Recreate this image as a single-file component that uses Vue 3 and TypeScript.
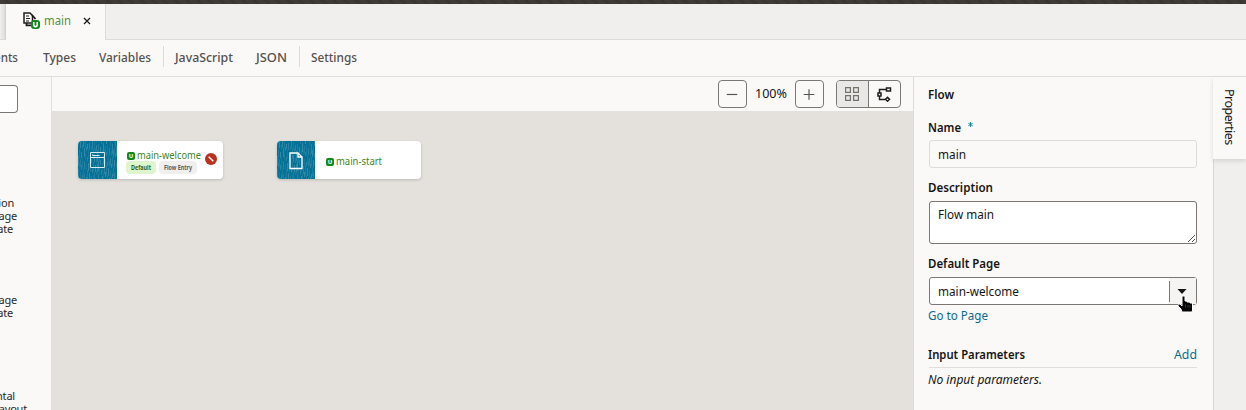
<script setup lang="ts">
import type { Directive } from 'vue'

interface Tab { label: string; width: number; kind?: string }

// Condenses a label horizontally to the given width.
const vFit: Directive<HTMLElement, number> = {
  mounted(el, binding) {
    const natural = el.getBoundingClientRect().width
    el.style.transform = `scaleX(${binding.value / natural})`
    el.style.marginRight = `${binding.value - natural}px`
  },
}

const tabs: Tab[] = [
  { label: 'Types', width: 33 },
  { label: 'Variables', width: 52, kind: 'last' },
  { label: 'JavaScript', width: 58, kind: 'divider' },
  { label: 'JSON', width: 31, kind: 'last' },
  { label: 'Settings', width: 46, kind: 'divider' },
]

// Thin vertical brush marks of the tile artwork.
const streaks = Array.from({ length: 110 }, (_, i) => ({
  x: (i * 16) % 39,
  y: ((i * 29 + 5) % 43) - 3,
  h: 4 + ((i * 5) % 7),
  o: 0.12 + (i % 4) * 0.07,
}))
</script>

<template>
  <div class="app">
    <div class="strip"></div>
    <header class="tabbar">
      <div class="prev"></div>
      <div class="file">
        <svg class="file-icon" width="17" height="17" viewBox="0 0 17 17">
          <path d="M1 1h6l2.500 2.500V11H1z" fill="#fbf9f8" stroke="#201e1c" stroke-width="1.500" />
          <path d="M3 4h3M3 6.500h4M3 9h3" stroke="#201e1c" />
          <path d="M9 3l3.500 4M3.500 11v2.300H8" fill="none" stroke="#201e1c" stroke-width="1.800" />
          <rect x="8" y="8" width="9" height="9" rx="3" fill="#128a1b" />
          <path d="M10.800 10v2.800q0 1.900 1.700 1.900t1.700-1.900V10" fill="none" stroke="#fff" stroke-width="1.500" />
        </svg>
        <span v-fit="27" class="t green">main</span>
        <svg class="close" width="8" height="8" viewBox="0 0 8 8"><path d="M1 1l6 6M7 1L1 7" stroke="#201e1c" stroke-width="1.300" /></svg>
      </div>
      <div class="rest"></div>
    </header>
    <nav class="nav">
      <div class="cut"><span v-fit="24" class="t">ents</span></div>
      <div v-for="tab in tabs" :key="tab.label" class="item" :class="tab.kind">
        <span v-fit="tab.width" class="t">{{ tab.label }}</span>
      </div>
    </nav>
    <main class="body">
      <aside class="palette">
        <div class="search"></div>
        <div class="names first"><p class="w14">ion</p><p class="w17">age</p><p class="w13">ate</p></div>
        <div class="names second"><p class="w17">age</p><p class="w13">ate</p></div>
        <div class="names third"><p class="w15">ntal</p><p class="w27">ayout</p></div>
      </aside>
      <section class="diagram">
        <div class="toolbar">
          <button class="btn"><svg width="28" height="26" viewBox="0 0 28 26"><path d="M8 13.500h11" stroke="#55514d" stroke-width="1.200" /></svg></button>
          <div class="zoom"><span v-fit="32" class="t">100%</span></div>
          <button class="btn"><svg width="28" height="26" viewBox="0 0 28 26"><path d="M8 13.500h11M13.500 8v11" stroke="#55514d" stroke-width="1.200" /></svg></button>
          <div class="modes">
            <div class="mode active">
              <svg width="14" height="14" viewBox="0 0 14 14"><path d="M.6.600h4.800v4.800H.6zM8.600.600h4.800v4.800H8.600zM.6 8.600h4.800v4.800H.6zM8.600 8.600h4.800v4.800H8.600z" fill="none" stroke="#75716d" stroke-width="1.200" /></svg>
            </div>
            <div class="mode">
              <svg width="15" height="15" viewBox="0 0 15 15" fill="none" stroke="#201e1c" stroke-width="1.500"><rect x="9.500" y="1" width="4" height="3" /><rect x="1" y="6" width="3" height="3" /><path d="M9.500 2.500H2.500V6M2.500 9v3.500H8" /><path d="M10.500 10.200l2 2-2 2-2-2z" /></svg>
            </div>
          </div>
        </div>
        <div class="canvas">
          <article class="card wide">
            <svg class="tile" width="39" height="39" viewBox="0 0 39 39">
              <rect width="39" height="39" fill="#057196" />
              <rect v-for="(s, i) in streaks" :key="i" :x="s.x" :y="s.y" width="1" :height="s.h" fill="#8fbacb" :opacity="s.o" />
              <path d="M12.500 11.500h14v15h-14zM12.500 16.500h14M14.500 13.500v1h7" fill="none" stroke="#d6e9ef" />
            </svg>
            <div class="info">
              <div class="name"><i class="u">U</i><span v-fit="64" class="t">main-welcome</span></div>
              <div class="badges"><b class="badge ok"><span v-fit="20" class="t">Default</span></b><b class="badge"><span v-fit="28" class="t">Flow Entry</span></b></div>
            </div>
            <svg class="error" width="12" height="12" viewBox="0 0 12 12"><circle cx="6" cy="6" r="6" fill="#b8321f" /><path d="M3.700 3.700l4.600 4.600" stroke="#fff" stroke-width="1.500" /></svg>
          </article>
          <article class="card">
            <svg class="tile" width="38" height="39" viewBox="0 0 38 39">
              <rect width="39" height="39" fill="#057196" />
              <rect v-for="(s, i) in streaks" :key="i" :x="s.x" :y="s.y" width="1" :height="s.h" fill="#8fbacb" :opacity="s.o" />
              <path d="M13 12h8l4 4v11.500H13zM21 12v4h4" fill="none" stroke="#fff" stroke-width="1.300" />
            </svg>
            <div class="info single"><div class="name"><i class="u">U</i><span v-fit="46" class="t">main-start</span></div></div>
          </article>
        </div>
      </section>
      <section class="props">
        <h2><span v-fit="26" class="t">Flow</span></h2>
        <label class="name-label"><span v-fit="33" class="t">Name</span><svg class="star" width="5" height="5" viewBox="0 0 5 5"><path d="M2.500 0v5M.3 1.200l4.400 2.600M4.700 1.200L.3 3.800" stroke="#0c7ea5" stroke-width=".9" /></svg></label>
        <div class="field readonly"><span v-fit="28" class="t">main</span></div>
        <label class="desc-label"><span v-fit="65" class="t">Description</span></label>
        <div class="field area"><span v-fit="56" class="t">Flow main</span>
          <svg class="grip" width="9" height="9" viewBox="0 0 9 9"><path d="M1 8l7-7M5 8l3-3" stroke="#55514d" /></svg>
        </div>
        <label class="desc-label"><span v-fit="72" class="t">Default Page</span></label>
        <div class="field select"><span v-fit="81" class="t">main-welcome</span>
          <div class="arrow">
            <svg width="10" height="5" viewBox="0 0 10 5"><path d="M.5 0h9L5 5z" fill="#161513" /></svg>
            <svg class="pointer" width="16" height="18" viewBox="0 0 16 18"><path d="M4 1h3v5h2v1h3v1h2.500v8l-1 1H4l-1-3-3-3V9h2l2 2z" fill="#050505" stroke="#fff" stroke-width="1" /><path d="M7.500 9.500v3M10 10v2.500M12 10.500v2" stroke="#555" stroke-width=".6" /></svg>
          </div>
        </div>
        <a class="goto"><span v-fit="60" class="t">Go to Page</span></a>
        <div class="params"><h2><span v-fit="97" class="t">Input Parameters</span></h2><a><span v-fit="23" class="t">Add</span></a></div>
        <em><span v-fit="114" class="t">No input parameters.</span></em>
      </section>
      <aside class="rail"><div class="rail-tab"><span>Properties</span></div></aside>
    </main>
  </div>
</template>

<style>
body { margin: 0; overflow: hidden; }
</style>
<style scoped>
.app { width: 1246px; height: 410px; overflow: hidden; display: flex; flex-direction: column; background: #fbf9f8; color: #161513; font: 13px/20px "Noto Sans", sans-serif; }
.app * { box-sizing: border-box; }
.t { display: inline-block; flex: none; white-space: nowrap; transform-origin: 0 50%; }
.strip { height: 4px; flex: none; background: repeating-linear-gradient(45deg, #3e3a36 0 5px, #393531 5px 8px); }
.tabbar { height: 36px; flex: none; display: flex; }
.prev { width: 6px; background: linear-gradient(90deg, #f0efed, #dedcda); border-bottom: 1px solid #dddbd8; border-right: 1px solid #d2d0cd; }
.file { width: 100px; display: flex; align-items: center; padding: 0 0 3px 17px; border-right: 1px solid #dddbd8; }
.file-icon { margin-right: 4px; flex: none; }
.green { color: #569039; margin-top: -2px; }
.close { margin-left: 12px; margin-top: 1px; flex: none; }
.rest { flex: 1; background: #f0efed; border-bottom: 1px solid #dddbd8; }
.nav { height: 37px; flex: none; display: flex; border-bottom: 1px solid #e1dfdc; color: #55514d; font-weight: 500; padding-top: 6px; }
.cut { width: 18px; display: flex; justify-content: flex-end; padding-top: 1px; margin-right: 13px; }
.item { height: 21px; padding: 1px 11px 0 12px; display: flex; }
.last { padding-right: 12px; }
.divider { border-left: 1px solid #dddbd8; padding-left: 11px; }
.body { flex: 1; display: flex; min-height: 0; }
.palette { width: 52px; flex: none; border-right: 1px solid #e1dfdc; overflow: hidden; }
.search { width: 18px; height: 28px; margin-top: 8px; border: 1px solid #7b7874; border-left: 0; border-radius: 0 4px 4px 0; background: #fff; }
.names { font-size: 11px; line-height: 13px; color: #2b2927; }
.names p { margin: 0; height: 13px; white-space: nowrap; display: flex; justify-content: flex-end; letter-spacing: -.2px; }
.first { margin-top: 83px; }
.second { margin-top: 58px; }
.third { margin-top: 70px; }
.w13 { width: 13px; } .w14 { width: 14px; } .w15 { width: 15px; } .w17 { width: 17px; } .w27 { width: 27px; }
.diagram { width: 862px; flex: none; border-right: 1px solid #dedbd7; }
.toolbar { height: 34px; display: flex; padding: 3px 12px 0 0; justify-content: flex-end; }
.btn { width: 29px; height: 28px; padding: 0; border: 1px solid #7b7874; border-radius: 4px; background: transparent; display: flex; }
.zoom { width: 48px; padding: 3px 0 0 8px; display: flex; }
.modes { width: 65px; height: 28px; margin-left: 12px; border: 1px solid #7b7874; border-radius: 4px; display: flex; overflow: hidden; }
.mode { flex: 1; display: flex; align-items: center; justify-content: center; padding-right: 1px; }
.active { background: #e9e8e6; border-right: 1px solid #7b7874; }
.canvas { height: 300px; background: #e4e1dc; display: flex; align-items: flex-start; gap: 54px; padding: 30px 0 0 26px; }
.card { width: 144px; height: 38px; display: flex; background: #fff; border-radius: 4px; overflow: hidden; box-shadow: 0 1px 3px rgba(40, 35, 30, .2); }
.wide { width: 145px; }
.tile { flex: none; }
.info { width: 84px; padding: 7px 0 0 10px; flex: none; }
.single { padding-top: 13px; padding-left: 11px; }
.name { display: flex; align-items: center; height: 14px; font-size: 10.500px; line-height: 14px; color: #418525; }
.u { width: 8px; height: 8px; flex: none; margin: 1px 1.500px 0 0; border-radius: 2px; background: #128a1b; color: #fff; font: bold 6px/8px "Noto Sans", sans-serif; text-align: center; }
.badges { display: flex; gap: 3px; margin: -1px 0 0 -1px; }
.badge { height: 13px; padding: 0 5px 0 5px; border-radius: 4px; display: flex; background: #f1efed; color: #5f5955; font-size: 7px; line-height: 13px; }
.ok { background: #def5ce; color: #35621d; }
.error { margin: 12px 0 0 4px; flex: none; }
.props { width: 299px; flex: none; padding: 7px 16px 0 15px; }
h2 { margin: 0 0 0 -1px; font: 600 13px/20px "Noto Sans", sans-serif; display: flex; }
label { display: flex; height: 20px; font-weight: 600; }
.name-label { margin: 13px 0 3px -1px; }
.star { margin: 5px 0 0 7px; }
.desc-label { margin: 9px 0 4px -1px; }
.field { height: 28px; border: 1px solid #7b7874; border-radius: 3px; background: #fff; padding: 3px 0 0 8px; display: flex; }
.readonly { background: #fbf9f8; border-color: #dddad7; }
.area { height: 43px; justify-content: space-between; padding-top: 2px; }
.grip { align-self: flex-end; }
.select { justify-content: space-between; }
.arrow { width: 27px; height: 26px; margin-top: -3px; background: linear-gradient(#7b7874, #7b7874) 0 3px / 1px 21px no-repeat, #f5f4f2; position: relative; padding: 11px 0 0 8px; line-height: 0; }
.pointer { position: absolute; left: 9px; top: 17px; }
a { color: #0b6b8e; display: flex; }
.goto { height: 20px; margin-left: -1px; }
.params { height: 24px; margin-top: 19px; display: flex; justify-content: space-between; border-bottom: 1px solid #e1dfdc; }
em { display: flex; margin: 1px 0 0 -1px; }
.rail { flex: 1; min-width: 0; background: #f0efed; border-left: 1px solid #d8d5d2; }
.rail-tab { width: 33px; height: 82px; margin-left: -1px; background: #fbf9f8; box-shadow: 0 2px 5px rgba(0, 0, 0, .12); }
.rail-tab span { display: block; writing-mode: vertical-rl; line-height: 33px; padding-top: 12px; font-size: 12.500px; letter-spacing: -.5px; }
</style>
